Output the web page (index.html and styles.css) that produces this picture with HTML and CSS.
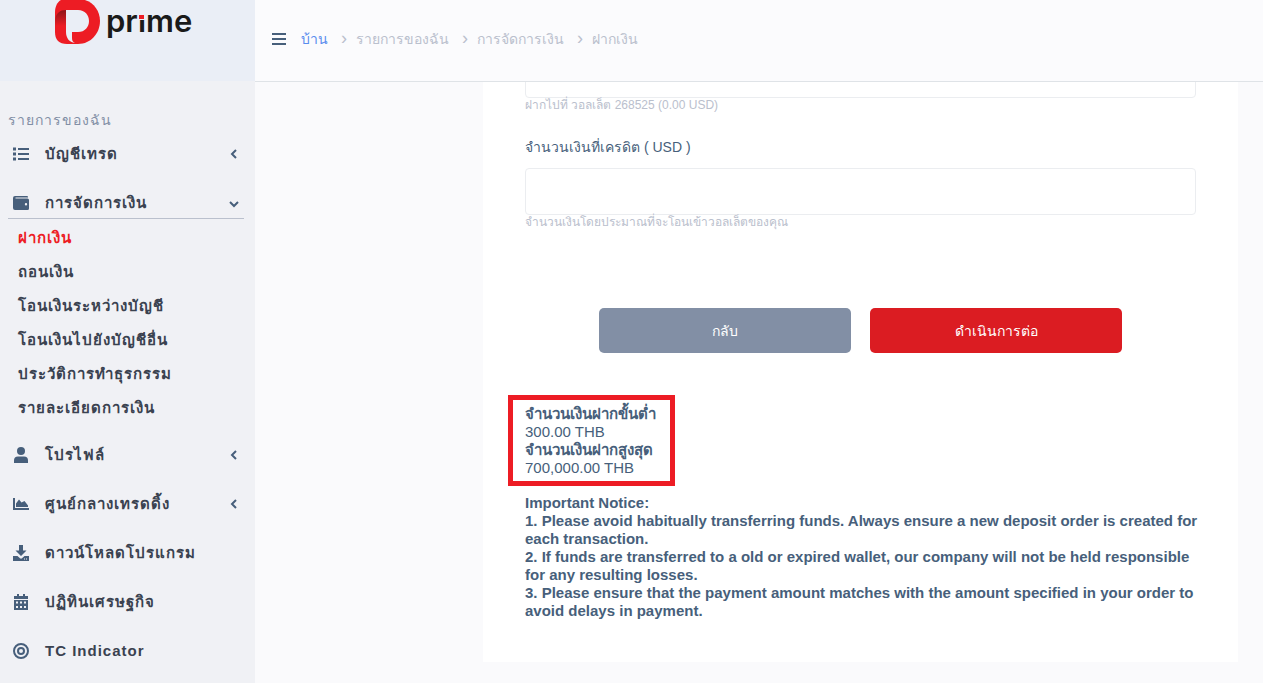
FILE: index.html
```html
<!DOCTYPE html>
<html lang="th">
<head>
  <meta charset="UTF-8" />
  <meta name="viewport" content="width=device-width, initial-scale=1.0" />
  <title>ฝากเงิน - D Prime</title>
  <link rel="stylesheet" href="styles.css">
</head>
<body>
  <aside class="sidebar">
    <a href="#" class="logo" aria-label="D prime">
      <svg width="140" height="46" viewBox="0 0 140 46">
        <defs>
          <linearGradient id="fold" x1="0" y1="0" x2="0" y2="1">
            <stop offset="0" stop-color="#8c1519" />
            <stop offset="1" stop-color="#ed1c24" />
          </linearGradient>
        </defs>
        <path fill="#ed1c24" d="M10 -1H23C36 -1 45 9 45 21S36 44 23 44H12C4 44 0 40 0 32V12C0 5 4 -1 10 -1Z" />
        <path fill="#eaeef6" d="M11 10H23C30 10 34 15 34 21S30 32 23 32H17V38C17 41 18 42 20 43C14 42 11 38 11 32Z" />
        <path fill="url(#fold)" d="M0 20C1 13 5 10 11 10V26H0Z" />
        <text class="logo-text" x="51" y="32">prime</text>
        <rect x="83" y="5" width="7" height="15" fill="#eaeef6" />
        <rect x="84" y="15" width="5" height="4" fill="#ed1c24" />
      </svg>
    </a>

    <nav class="menu">
      <h2>รายการของฉัน</h2>
      <ul>
        <li><a href="#">
          <svg class="icon" viewBox="0 0 16 16"><path d="M0 1.500h3v3H0zM0 6.500h3v3H0zM0 11.500h3v3H0zM5 2h11v2H5zM5 7h11v2H5zM5 12h11v2H5z" /></svg>
          <span>บัญชีเทรด</span>
          <svg class="arrow" viewBox="0 0 10 10"><path d="M7 1L3 5L7 9" /></svg>
        </a></li>
        <li><a href="#" class="open">
          <svg class="icon" viewBox="0 0 16 16"><path fill-rule="evenodd" d="M2 1H14Q15 1 15 2V2.500H2.500V3.500H14.500Q16 3.500 16 5V13.500Q16 15 14.500 15H2Q0 15 0 13V3Q0 1 2 1ZM13 8a1.200 1.200 0 1 0 0 2.400a1.200 1.200 0 1 0 0-2.400Z" /></svg>
          <span>การจัดการเงิน</span>
          <svg class="arrow" viewBox="0 0 10 10"><path d="M1 4L5 8L9 4" /></svg>
        </a>
          <ul class="submenu">
            <li><a href="#" class="active">ฝากเงิน</a></li>
            <li><a href="#">ถอนเงิน</a></li>
            <li><a href="#">โอนเงินระหว่างบัญชี</a></li>
            <li><a href="#">โอนเงินไปยังบัญชีอื่น</a></li>
            <li><a href="#">ประวัติการทำธุรกรรม</a></li>
            <li><a href="#">รายละเอียดการเงิน</a></li>
          </ul>
        </li>
        <li><a href="#">
          <svg class="icon" viewBox="0 0 16 16"><circle cx="8" cy="4" r="4" /><path d="M1 16V13.500Q1 9.500 5 9.500H11Q15 9.500 15 13.500V16Z" /></svg>
          <span>โปรไฟล์</span>
          <svg class="arrow" viewBox="0 0 10 10"><path d="M7 1L3 5L7 9" /></svg>
        </a></li>
        <li><a href="#">
          <svg class="icon" viewBox="0 0 16 16"><path d="M0 2H2V12H16V14H0ZM3 11V7.500L6 3.500L8.500 6.500L11.500 5L15 9.500V11Z" /></svg>
          <span>ศูนย์กลางเทรดดิ้ง</span>
          <svg class="arrow" viewBox="0 0 10 10"><path d="M7 1L3 5L7 9" /></svg>
        </a></li>
        <li><a href="#">
          <svg class="icon" viewBox="0 0 16 16"><path fill-rule="evenodd" d="M6 0H10V5.500H13.500L8 11L2.500 5.500H6ZM0 11H4.500L7 13.300Q8 14 9 13.300L11.500 11H16V16H0ZM11 13.500V14.500H12V13.500ZM13 13.500V14.500H14V13.500Z" /></svg>
          <span>ดาวน์โหลดโปรแกรม</span>
        </a></li>
        <li><a href="#">
          <svg class="icon" viewBox="0 0 16 16"><path fill-rule="evenodd" d="M4 0H6V2H10V0H12V2H15V5H1V2H4ZM1 6H15V16H1ZM3 7.500V9.500H5V7.500ZM7 7.500V9.500H9V7.500ZM11 7.500V9.500H13V7.500ZM3 12V14H5V12ZM7 12V14H9V12ZM11 12V14H13V12Z" /></svg>
          <span>ปฏิทินเศรษฐกิจ</span>
        </a></li>
        <li><a href="#">
          <svg class="icon ring" viewBox="0 0 16 16"><circle cx="8" cy="8" r="7" /><circle cx="8" cy="8" r="3" /></svg>
          <span>TC Indicator</span>
        </a></li>
      </ul>
    </nav>
  </aside>

  <div class="page">
    <header class="topbar">
      <button type="button" class="toggle" aria-label="เมนู">
        <svg width="14" height="12" viewBox="0 0 14 12"><path d="M0 0H14V2H0ZM0 5H14V7H0ZM0 10H14V12H0Z" /></svg>
      </button>
      <ol class="breadcrumb">
        <li><a href="#">บ้าน</a></li>
        <li>รายการของฉัน</li>
        <li>การจัดการเงิน</li>
        <li>ฝากเงิน</li>
      </ol>
    </header>

    <main class="content">
      <form class="card">
        <div class="field">
          <input type="text" id="wallet" aria-label="วอลเล็ต" aria-describedby="walletHelp" />
          <small id="walletHelp">ฝากไปที่ วอลเล็ต 268525 (0.00 USD)</small>
        </div>
        <div class="field">
          <label for="credit">จำนวนเงินที่เครดิต ( USD )</label>
          <input type="text" id="credit" aria-describedby="creditHelp" />
          <small id="creditHelp">จำนวนเงินโดยประมาณที่จะโอนเข้าวอลเล็ตของคุณ</small>
        </div>

        <div class="buttons">
          <button type="button" class="btn back">กลับ</button>
          <button type="submit" class="btn next">ดำเนินการต่อ</button>
        </div>

        <div class="limits">
          <b>จำนวนเงินฝากขั้นต่ำ</b>
          <p>300.00 THB</p>
          <b>จำนวนเงินฝากสูงสุด</b>
          <p>700,000.00 THB</p>
        </div>

        <div class="notice">
          <p>Important Notice:</p>
          <p>1. Please avoid habitually transferring funds. Always ensure a new deposit order is created for each transaction.</p>
          <p>2. If funds are transferred to a old or expired wallet, our company will not be held responsible for any resulting losses.</p>
          <p>3. Please ensure that the payment amount matches with the amount specified in your order to avoid delays in payment.</p>
        </div>
      </form>
    </main>
  </div>
</body>
</html>
```
FILE: styles.css
```css
:root {
  --slate: #475f7b;
  --red: #ed1c24;
  --grey: #bac0cd;
}

* {
  margin: 0;
  padding: 0;
  box-sizing: border-box;
}

body {
  font-family: "Liberation Sans", "Noto Sans", sans-serif;
  font-size: 15px;
  line-height: 18px;
  color: var(--slate);
  background: #fafafc;
  display: flex;
  height: 100vh;
  overflow: hidden;
}

ul,
ol {
  list-style: none;
}

a {
  color: inherit;
  text-decoration: none;
}

/* sidebar */
.sidebar {
  flex: 0 0 255px;
  background: #f0f1f5;
  overflow: hidden;
}

.logo {
  display: block;
  height: 81px;
  padding-left: 55px;
  background: #eaeef6;
}

.logo-text {
  font-family: Inter, sans-serif;
  font-size: 31px;
  font-weight: 600;
  fill: #1a1a1a;
}

.menu {
  padding: 30px 11px 0 8px;
  letter-spacing: 1px;
}

.menu h2 {
  font-size: 14px;
  font-weight: normal;
  color: #828fa5;
}

.menu li > a {
  display: flex;
  align-items: center;
  height: 49px;
  padding: 0 5px;
  font-weight: bold;
  color: #3a4250;
}

.menu li > a.open {
  height: 41px;
  padding-top: 10px;
  border-bottom: 1px solid #bac0cd;
}

.menu span {
  flex: 1;
}

.icon {
  width: 16px;
  height: 16px;
  margin-right: 16px;
  fill: var(--slate);
}

.icon.ring {
  fill: none;
  stroke: var(--slate);
  stroke-width: 2;
}

.arrow {
  width: 10px;
  height: 10px;
  fill: none;
  stroke: var(--slate);
  stroke-width: 2;
}

.submenu {
  padding: 2px 0 5px;
}

.submenu li > a {
  height: 34px;
  padding: 0 10px;
}

.submenu li > a.active {
  color: var(--red);
}

/* top bar */
.page {
  flex: 1;
  display: flex;
  flex-direction: column;
  min-width: 0;
}

.topbar {
  flex: 0 0 82px;
  display: flex;
  align-items: center;
  padding: 0 17px 4px;
  border-bottom: 1px solid #dfe3e7;
  background: #fbfbfd;
}

.toggle {
  display: flex;
  border: none;
  background: none;
  margin-right: 15px;
  cursor: pointer;
}

.toggle svg {
  fill: var(--slate);
}

.breadcrumb {
  display: flex;
  align-items: baseline;
  font-size: 14px;
  color: var(--grey);
}

.breadcrumb li + li::before {
  content: "›";
  padding: 0 9px 0 13px;
  font-size: 18px;
}

.breadcrumb a {
  color: #5a8dee;
}

/* deposit form */
.content {
  flex: 1;
  overflow: hidden;
  padding: 0 25px 21px 228px;
}

.card {
  display: flow-root;
  height: 100%;
  padding: 0 42px;
  background: white;
}

.field input {
  display: block;
  width: 100%;
  height: 47px;
  padding: 0 12px;
  border: 1px solid #ebedf0;
  border-radius: 4px;
  font: inherit;
  color: inherit;
}

.field label {
  display: block;
  padding: 25px 0 12px;
  font-size: 14px;
}

.field small {
  display: block;
  font-size: 12px;
  line-height: 15px;
  color: var(--grey);
}

/* the form is scrolled, so the first field goes under the top bar */
.field:first-child {
  margin-top: -31px;
}

.buttons {
  display: flex;
  justify-content: center;
  gap: 19px;
  margin-top: 78px;
}

.btn {
  width: 252px;
  height: 45px;
  border: none;
  border-radius: 5px;
  font: inherit;
  font-size: 14px;
  color: white;
  cursor: pointer;
}

.back {
  background: #828fa5;
}

.next {
  background: #db1c22;
}

.limits {
  width: fit-content;
  margin: 42px 0 8px -17px;
  padding: 5px 14px 4px 12px;
  border: 5px solid var(--red);
}

.limits b {
  display: block;
}

.notice {
  margin-right: -8px;
  font-weight: bold;
}
```
